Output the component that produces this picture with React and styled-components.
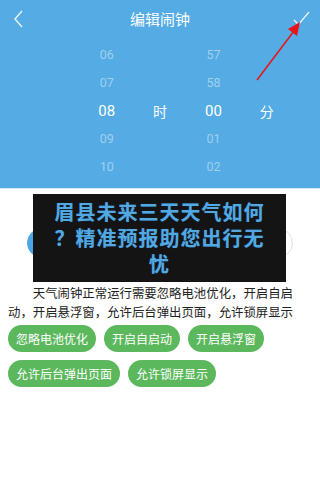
import React from 'react'
import styled, { createGlobalStyle } from 'styled-components'

const GlobalStyle = createGlobalStyle`
  html, body {
    margin: 0;
    padding: 0;
    background: #fff;
  }
  body {
    font-family: Roboto, "Noto Sans CJK SC", sans-serif;
  }
`

const Page = styled.div`
  position: relative;
  width: 320px;
  height: 477px;
  overflow: hidden;
  background: #fff;
`

const TopPanel = styled.div`
  background: #55abe4;
  height: 188px;
  border-bottom: 1px solid #d4e9f7;
`

const Header = styled.div`
  height: 37px;
  display: flex;
  align-items: center;
  justify-content: space-between;
  padding: 0 8px 0 8px;
`

const Title = styled.h1`
  margin: 0;
  font-size: 15px;
  font-weight: 400;
  color: #fff;
  font-family: "Noto Sans CJK SC", sans-serif;
`

const IconButton = styled.div`
  width: 20px;
  height: 20px;
  display: flex;
  align-items: center;
  justify-content: center;
`

const Picker = styled.div`
  display: grid;
  grid-template-columns: repeat(4, 53.4px);
  padding: 4px 0 0 80px;
`

const Column = styled.div`
  display: flex;
  flex-direction: column;
  align-items: center;
`

const Cell = styled.div`
  height: 28px;
  line-height: 28px;
  font-size: ${p => (p.$active ? '15px' : '12.5px')};
  color: ${p => (p.$active ? '#fff' : 'rgba(255,255,255,0.45)')};
  font-family: Roboto, "Noto Sans CJK SC", sans-serif;
`

const Unit = styled.div`
  height: 140px;
  line-height: 140px;
  font-size: 14px;
  color: #fff;
  font-family: "Noto Sans CJK SC", sans-serif;
`

const OptionRow = styled.div`
  display: flex;
  justify-content: space-between;
  padding: 39px 27px 0 27px;
`

const Circle = styled.div`
  width: 30px;
  height: 30px;
  border-radius: 50%;
  box-sizing: border-box;
  background: ${p => (p.$on ? '#4ba6e4' : '#fff')};
  border: 1px solid ${p => (p.$on ? '#4ba6e4' : '#e2e2e2')};
`

const Notice = styled.p`
  margin: 26px 0 0 0;
  padding: 0 8px;
  font-size: 12.4px;
  line-height: 19px;
  color: #222;
  text-indent: 2em;
  font-family: "Noto Sans CJK SC", sans-serif;
`

const Buttons = styled.div`
  display: flex;
  flex-wrap: wrap;
  gap: 8px 8px;
  padding: 3px 8px 0 8px;
`

const GreenButton = styled.button`
  height: 27px;
  padding: 0 8px;
  border: none;
  border-radius: 14px;
  background: #5cb85c;
  color: #fff;
  font-size: 12px;
  font-family: "Noto Sans CJK SC", sans-serif;
  cursor: pointer;
`

const Overlay = styled.div`
  position: absolute;
  left: 33px;
  top: 194px;
  width: 253px;
  height: 88px;
  box-sizing: border-box;
  padding: 5px 12px;
  background: #141414;
  color: #52a8e2;
  font-size: 20px;
  font-weight: 700;
  line-height: 26px;
  letter-spacing: 1px;
  text-align: center;
  line-break: anywhere;
  word-break: break-all;
  font-family: "Noto Sans CJK SC", sans-serif;
  text-shadow: 0 0 1px #1d4a6a;
`

const Arrow = styled.svg`
  position: absolute;
  left: 250px;
  top: 15px;
`

const hours = ['06', '07', '08', '09', '10']
const minutes = ['57', '58', '00', '01', '02']

const App = () => {
  return (
    <Page>
      <GlobalStyle />
      <TopPanel>
        <Header>
          <IconButton>
            <svg width="12" height="18" viewBox="0 0 12 18">
              <path d="M10 1 L3 9 L10 17" fill="none" stroke="#e8f4fc" strokeWidth="1.4" />
            </svg>
          </IconButton>
          <Title>编辑闹钟</Title>
          <IconButton>
            <svg width="18" height="16" viewBox="0 0 18 16">
              <path d="M1 9 L5.5 13.5 L16 1" fill="none" stroke="#e8f4fc" strokeWidth="1.3" />
            </svg>
          </IconButton>
        </Header>
        <Picker>
          <Column>
            {hours.map((h, i) => (
              <Cell key={h} $active={i === 2}>{h}</Cell>
            ))}
          </Column>
          <Column>
            <Unit>时</Unit>
          </Column>
          <Column>
            {minutes.map((m, i) => (
              <Cell key={m} $active={i === 2}>{m}</Cell>
            ))}
          </Column>
          <Column>
            <Unit>分</Unit>
          </Column>
        </Picker>
      </TopPanel>

      <OptionRow>
        <Circle $on />
        <Circle />
      </OptionRow>

      <Notice>
        天气闹钟正常运行需要忽略电池优化，开启自启动，开启悬浮窗，允许后台弹出页面，允许锁屏显示
      </Notice>

      <Buttons>
        <GreenButton>忽略电池优化</GreenButton>
        <GreenButton>开启自启动</GreenButton>
        <GreenButton>开启悬浮窗</GreenButton>
        <GreenButton>允许后台弹出页面</GreenButton>
        <GreenButton>允许锁屏显示</GreenButton>
      </Buttons>

      <Overlay>眉县未来三天天气如何？精准预报助您出行无忧</Overlay>

      <Arrow width="60" height="70" viewBox="0 0 60 70">
        <line x1="7" y1="65" x2="44" y2="16" stroke="#e8141a" strokeWidth="1.5" />
        <polygon points="50,7 38,14 47,21" fill="#e8141a" />
      </Arrow>
    </Page>
  )
}

export default App
